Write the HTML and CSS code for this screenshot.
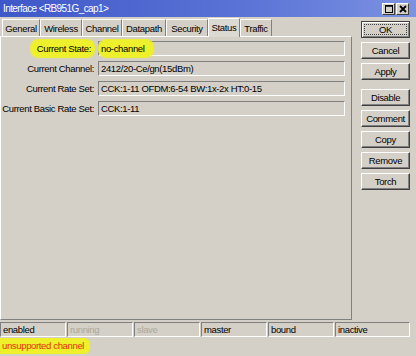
FILE: index.html
```html
<!DOCTYPE html>
<html lang="en">
<head>
    <meta charset="UTF-8">
    <title>Interface &lt;RB951G_cap1&gt;</title>
    <link rel="stylesheet" href="styles.css">
</head>
<body>
    <div class="window">
        <div class="titlebar">
            <span class="title">Interface &lt;RB951G_cap1&gt;</span>
            <div class="controls">
                <span class="ctl">
                    <svg width="10" height="10" viewBox="0 0 10 10"><rect x="1.5" y="1.5" width="7" height="7" fill="none" stroke="#000" stroke-width="1"/><line x1="1" y1="2" x2="9" y2="2" stroke="#000" stroke-width="1.5"/></svg>
                </span>
                <span class="ctl">
                    <svg width="10" height="10" viewBox="0 0 10 10"><path d="M2 2 L8 8 M8 2 L2 8" stroke="#000" stroke-width="1.8"/></svg>
                </span>
            </div>
        </div>

        <div class="body">
            <div class="main">
                <div class="tabs">
                    <div class="tab">General</div>
                    <div class="tab">Wireless</div>
                    <div class="tab">Channel</div>
                    <div class="tab">Datapath</div>
                    <div class="tab">Security</div>
                    <div class="tab active">Status</div>
                    <div class="tab">Traffic</div>
                </div>
                <div class="panel">
                    <div class="row">
                        <label class="label"><span class="mark">Current State:</span></label>
                        <div class="field"><span class="mark mark-val">no-channel</span></div>
                    </div>
                    <div class="row">
                        <label class="label">Current Channel:</label>
                        <div class="field">2412/20-Ce/gn(15dBm)</div>
                    </div>
                    <div class="row">
                        <label class="label">Current Rate Set:</label>
                        <div class="field">CCK:1-11 OFDM:6-54 BW:1x-2x HT:0-15</div>
                    </div>
                    <div class="row">
                        <label class="label">Current Basic Rate Set:</label>
                        <div class="field">CCK:1-11</div>
                    </div>
                </div>
            </div>

            <div class="buttons">
                <button class="btn default">OK</button>
                <button class="btn">Cancel</button>
                <button class="btn">Apply</button>
                <button class="btn spaced">Disable</button>
                <button class="btn">Comment</button>
                <button class="btn">Copy</button>
                <button class="btn">Remove</button>
                <button class="btn">Torch</button>
            </div>
        </div>

        <div class="statusbar">
            <div class="cell">enabled</div>
            <div class="cell off">running</div>
            <div class="cell off">slave</div>
            <div class="cell">master</div>
            <div class="cell">bound</div>
            <div class="cell last">inactive</div>
        </div>
        <div class="message"><span class="warn">unsupported channel</span></div>
    </div>
</body>
</html>
```

FILE: styles.css
```css
html, body {
    margin: 0;
    padding: 0;
}
body {
    font-family: "Liberation Sans", Arial, sans-serif;
    font-size: 9.5px;
    letter-spacing: -0.35px;
    color: #000;
    background: #d4d0c8;
}
.window {
    width: 416px;
    height: 356px;
    background: #d4d0c8;
    overflow: hidden;
    display: flex;
    flex-direction: column;
}

/* title bar */
.titlebar {
    height: 17px;
    background: linear-gradient(to right, #3f58c9, #5b74d6 60%, #7c92e2);
    display: flex;
    align-items: center;
    justify-content: space-between;
    padding: 0 7px 0 3px;
    color: #fff;
    font-size: 10px;
    letter-spacing: -0.6px;
}
.controls {
    display: flex;
    gap: 1px;
    margin-top: 2px;
}
.ctl {
    width: 11px;
    height: 10px;
    background: #d4d0c8;
    border: 1px solid;
    border-color: #fff #404040 #404040 #fff;
    display: flex;
    align-items: center;
    justify-content: center;
}

/* body */
.body {
    display: flex;
    height: 303px;
    margin-top: 1px;
}
.main {
    width: 352px;
    display: flex;
    flex-direction: column;
}
.tabs {
    display: flex;
    height: 18px;
    padding-left: 2px;
    align-items: flex-end;
}
.tab {
    height: 17px;
    line-height: 17px;
    text-align: center;
    white-space: nowrap;
    box-sizing: border-box;
    border: 1px solid;
    border-color: #fff #808080 transparent #fff;
    border-bottom: none;
}
.tab:nth-child(1) { width: 38px; }
.tab:nth-child(2) { width: 42px; }
.tab:nth-child(3) { width: 40px; }
.tab:nth-child(4) { width: 44px; }
.tab:nth-child(5) { width: 42px; }
.tab:nth-child(6) { width: 32px; }
.tab:nth-child(7) { width: 32px; }
.tab.active {
    height: 19px;
    line-height: 17px;
    background: #dcd9d2;
    margin-bottom: -1px;
    position: relative;
    z-index: 1;
}
.panel {
    flex: 1;
    border: 1px solid;
    border-color: #fff #808080 #808080 #fff;
    box-sizing: border-box;
    padding-top: 4px;
    display: flex;
    flex-direction: column;
    gap: 5px;
}
.row {
    display: flex;
    align-items: center;
    height: 15px;
}
.label {
    width: 96px;
    text-align: right;
    padding-right: 3px;
    box-sizing: border-box;
    flex-shrink: 0;
    white-space: nowrap;
}
.field {
    width: 247px;
    margin-left: 1px;
    height: 15px;
    line-height: 13px;
    box-sizing: border-box;
    border: 1px solid;
    border-color: #808080 #fff #fff #808080;
    padding-left: 2px;
    white-space: nowrap;
}
.mark {
    background: #eef02c;
    border-radius: 7px;
    padding: 3px 3px 3px 6px;
    box-shadow: 0 0 1px 1px #eef02c;
}
.mark-val {
    padding: 3px 8px 3px 2px;
    margin-left: -2px;
}

/* buttons */
.buttons {
    display: flex;
    flex-direction: column;
    gap: 4px;
    padding-top: 3px;
    margin-left: 9px;
    width: 49px;
}
.btn {
    height: 17px;
    width: 49px;
    font-family: inherit;
    font-size: 9.5px;
    letter-spacing: -0.35px;
    color: #000;
    background: #d4d0c8;
    border: 1px solid;
    border-color: #fff #404040 #404040 #fff;
    box-shadow: inset -1px -1px 0 #808080;
    padding: 0;
}
.btn.default {
    outline: 1px dotted #404040;
    outline-offset: -4px;
    border-color: #404040;
    box-shadow: inset 1px 1px 0 #fff, inset -1px -1px 0 #808080;
}
.btn.spaced {
    margin-top: 5px;
}

/* status */
.statusbar {
    display: flex;
    margin-top: 2px;
    height: 15px;
}
.cell {
    width: 66px;
    margin-right: 1px;
    height: 15px;
    line-height: 13px;
    box-sizing: border-box;
    border: 1px solid;
    border-color: #808080 #fff #fff #808080;
    padding-left: 2px;
}
.cell.off {
    color: #aca899;
}
.cell.last {
    width: 75px;
}
.message {
    padding-top: 3px;
    height: 16px;
}
.warn {
    color: #e2300c;
    background: #eef02c;
    border-radius: 0 6px 6px 0;
    padding: 2px 6px 3px 2px;
}
```
